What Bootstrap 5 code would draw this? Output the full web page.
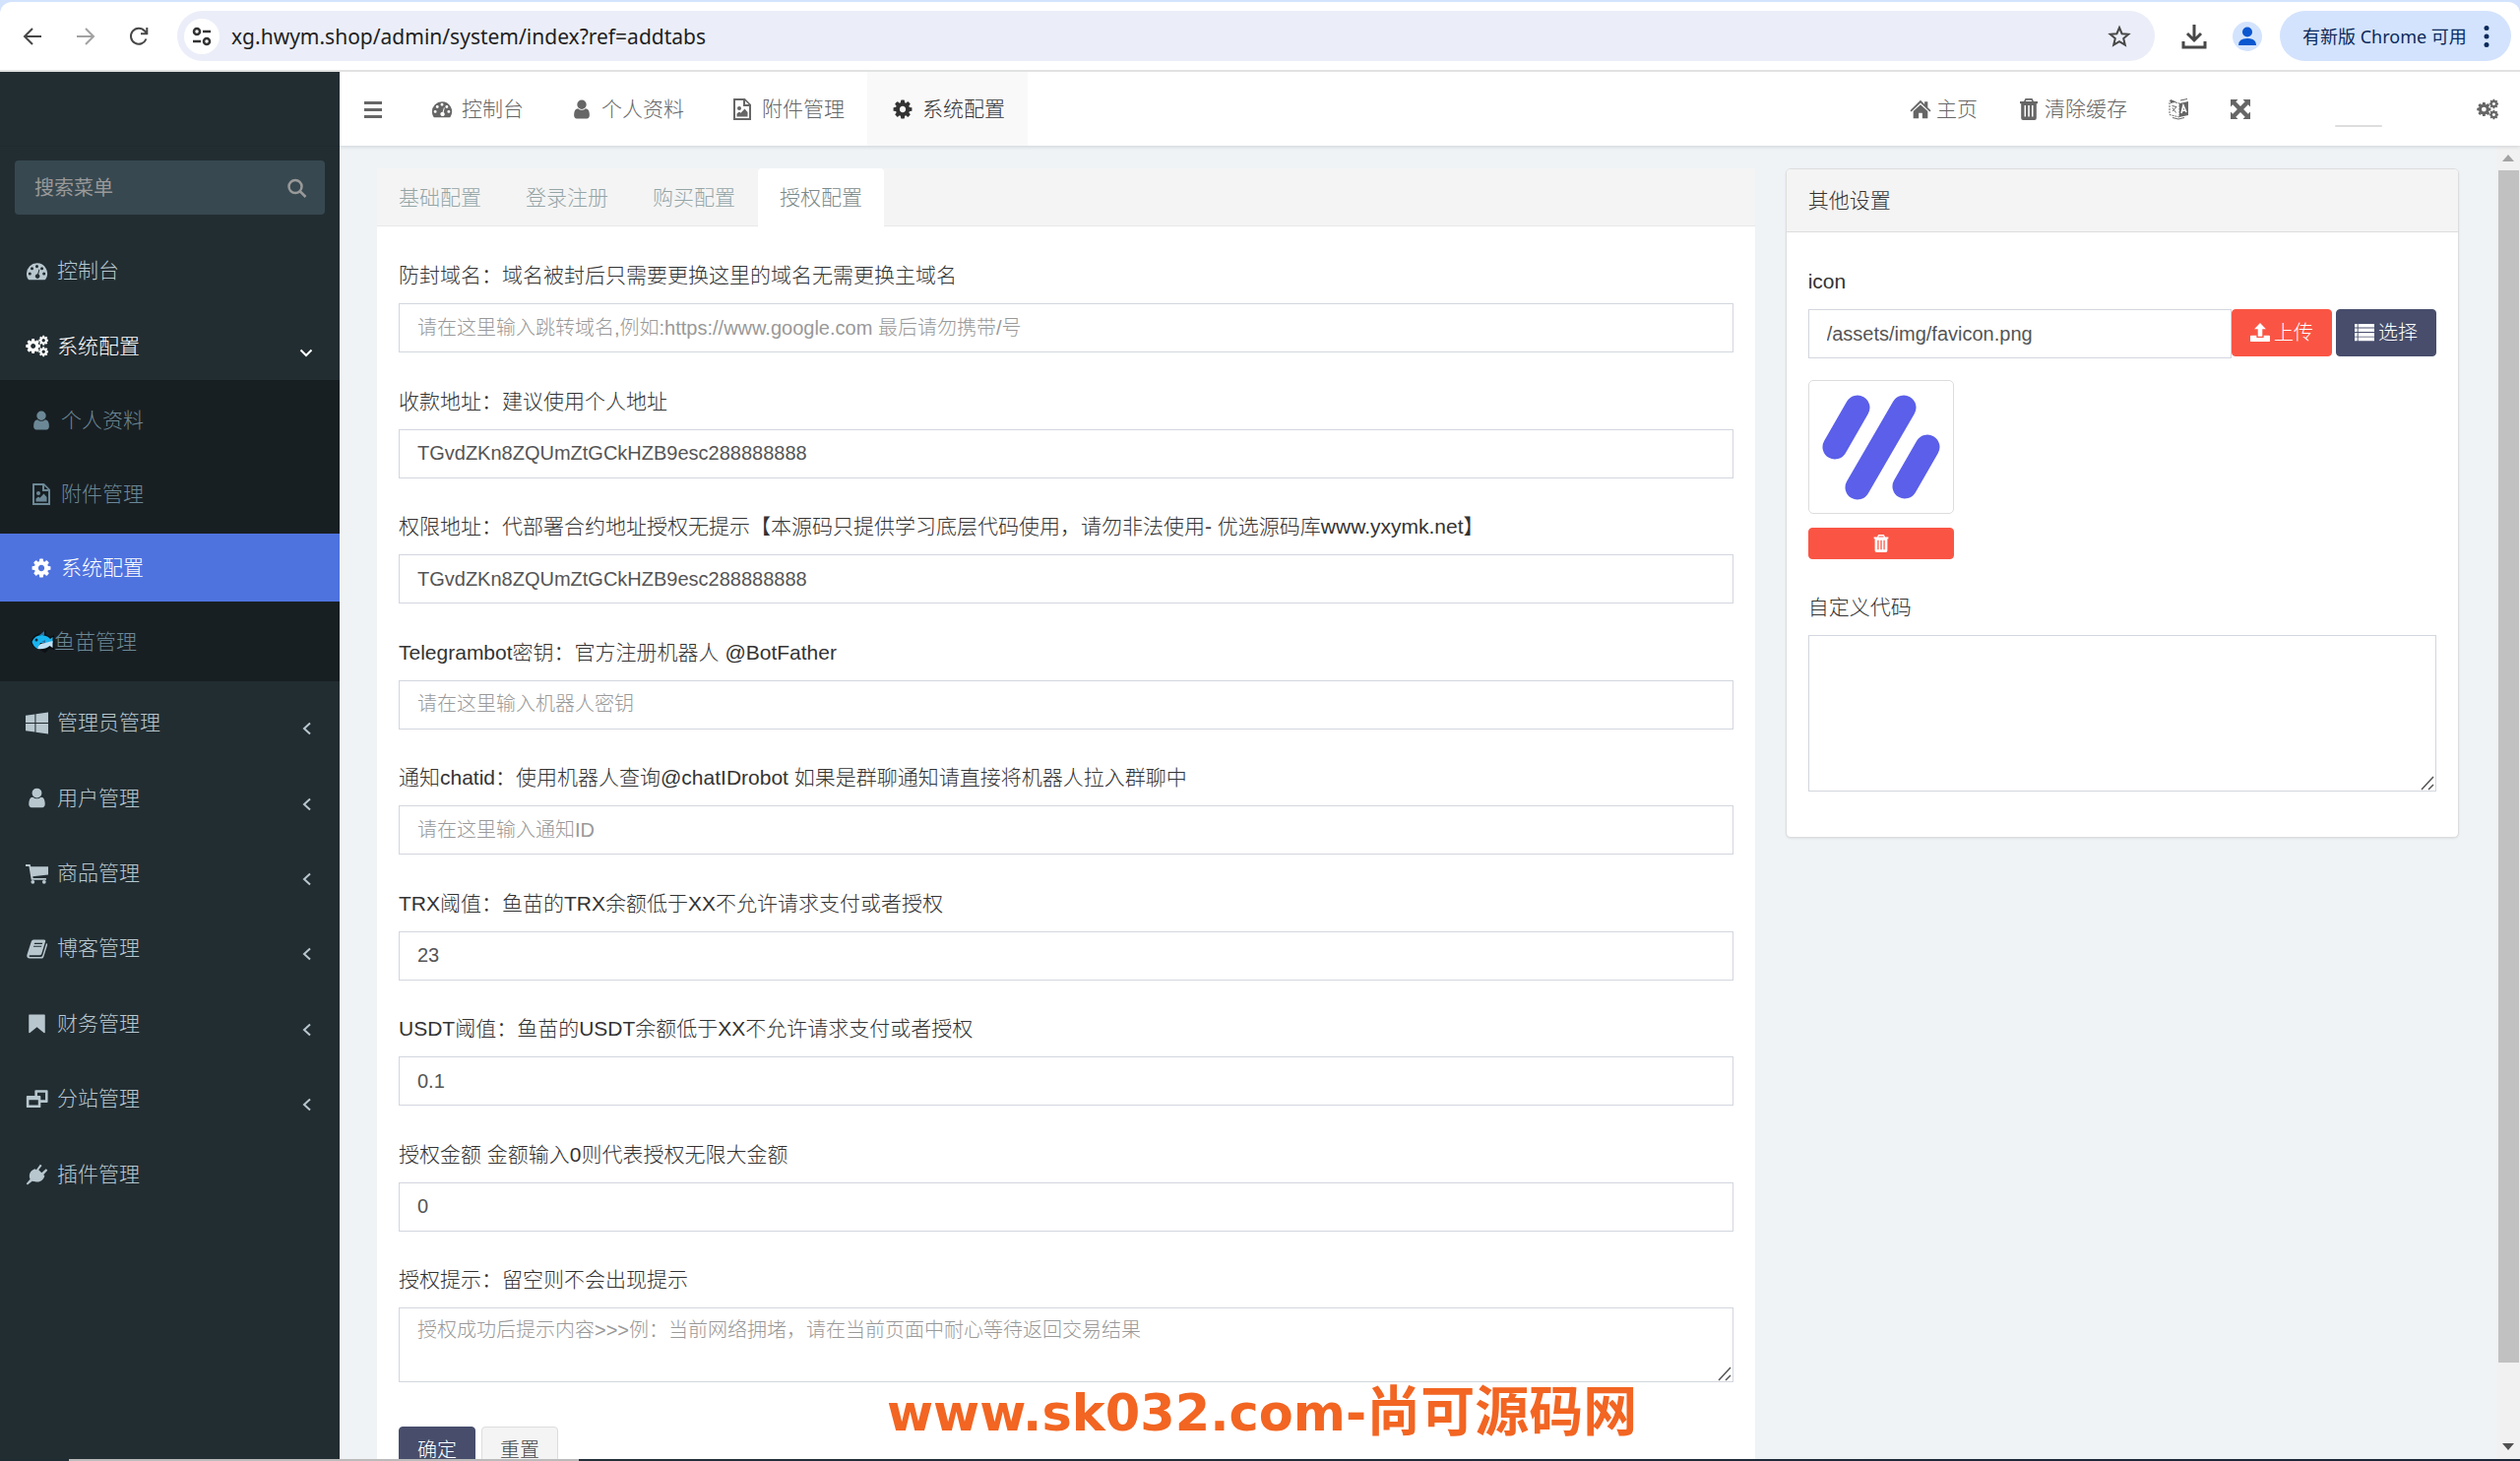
<!DOCTYPE html>
<html lang="zh-CN">
<head>
<meta charset="utf-8">
<meta name="viewport" content="width=device-width, initial-scale=1">
<title>系统配置</title>
<link href="https://cdn.jsdelivr.net/npm/bootstrap@5.3.0/dist/css/bootstrap.min.css" rel="stylesheet">
<style>
body{font-family:"Liberation Sans","Noto Sans CJK SC",sans-serif;font-size:21px;font-weight:300;line-height:30px;color:#333;height:100vh;overflow:hidden;background:#eff3f6}
a{color:inherit;text-decoration:none}
svg{display:block;flex:none}
.ic{width:22px;height:22px;fill:currentColor}
/* browser bar */
.chrome{background:#d3e3fd;padding-top:2px;flex:none}
.chrome-in{background:#fff;border-radius:12px 12px 0 0;height:71px;border-bottom:2px solid #e0e2e1;padding:0 9px 0 22px;font-family:"Noto Sans","Noto Sans CJK SC",sans-serif;font-weight:400}
.chrome button{border:0;background:none;padding:0;color:#474747}
.nav-ic{width:22px;height:22px;fill:none;stroke:currentColor;stroke-width:2}
.omni{background:#ebeef8;border-radius:26px;height:51px;padding:0 24px 0 7px;margin:0 26px 0 28px}
.site{width:36px;height:36px;border-radius:50%;background:#fff}
.omni input{border:0;background:none;outline:0;font-size:21px;color:#1f1f1f;padding:0}
.chrome .avatar{width:30px;height:30px;border-radius:50%;background:#d3e3fd;overflow:hidden;margin:0 18px 0 25px}
.chrome .update{background:#d3e3fd;border-radius:26px;height:51px;width:235px;padding:0 18px 0 23px;font-size:18px;color:#0b2a5b}
/* sidebar */
.side{width:345px;background:#222d32;color:#b8c7ce;flex:none}
.brand{height:76px;border-bottom:1px solid #1f292e}
.find{margin:14px 15px 15px;height:55px;background:#374850;border-radius:4px;padding:0 17px 0 20px;color:#999}
.find input{border:0;background:none;outline:0;color:#999;font-size:20px;padding:0;min-width:0}
.find input::placeholder{color:#999}
.menu{display:grid;grid-auto-rows:1fr}
.menu-top{height:153px}
.menu-rest{height:535px}
.menu a{display:flex;align-items:center;padding:8px 27px 0 26px}
.menu a .ic{width:23px;height:23px;margin-right:9px}
.menu a .chev{width:12px;height:14px;margin:12px 0 0 auto;fill:none;stroke:currentColor;stroke-width:2}
.menu a .chev-open{width:14px}
.sub{background:#181f23;padding:6px 0;display:grid;gap:6px;color:#6c8896}
.sub a{display:flex;align-items:center;height:69px;padding-left:31px}
.sub a .ic{margin-right:9px}
.sub a .fish{width:24px;height:24px}
.sub a.on{background:#4e73df;color:#fff}
/* top bar */
.top{height:75px;background:#fff;color:#666;box-shadow:0 1px 4px rgba(0,21,41,.15);flex:none;z-index:2}
.top a{display:flex;align-items:center;height:75px}
.tabs-main a{padding:0 23px}
.tabs-main .ic{margin:0 9px 0 2px}
.tabs-main a.on{background:#f9f9f9;color:#333}
.tools{padding-right:22px;gap:41px}
.tools a{gap:5px}
.userline{width:48px;height:2px;background:#ddd;border-radius:2px;margin:34px 55px 0 44px}
/* content */
.pane{padding:23px 0 0 38px}
.main-col{flex:1401;min-width:0}
.side-col{flex:683;min-width:0;margin:0 38px 0 31px}
.cfg-tabs{background:#f4f4f4;height:59px;border-bottom:1px solid #e8e8e8;gap:1px;color:#95a5a6}
.cfg-tabs a{padding:0 22px;height:59px;line-height:60px}
.cfg-tabs a.on{background:#fff;color:#7b8a8b;border-radius:4px 4px 0 0}
.cfg-body{background:#fff;padding:35px 22px 0;height:1300px}
.rows{display:grid;grid-template-rows:repeat(8,1fr);height:1020px}
.lab{display:block;margin-bottom:13px;line-height:30px}
.form-control,.form-control:focus{font-size:20px;font-weight:300;line-height:28px;color:#555;border:1px solid #d2d6de;border-radius:0;padding:10px 18px;box-shadow:none;background:#fff}
input.form-control{height:50px}
.form-control::placeholder{color:#999;opacity:1}
textarea.form-control{resize:vertical}
textarea.form-control::-webkit-resizer{background:url("data:image/svg+xml,%3Csvg xmlns='http://www.w3.org/2000/svg' viewBox='0 0 15 15'%3E%3Cpath d='M1 14L13 1M8 14l5-5' stroke='%23555' stroke-width='1.500' fill='none'/%3E%3C/svg%3E") center/contain no-repeat}
.tip{height:76px}
.tip.form-control{padding-top:8px;min-height:76px}
.code.form-control{height:159px}
.acts{margin-top:45px;gap:6px}
.btn{font-size:20px;font-weight:300;line-height:28px;border-radius:4px;padding:9px 18px;height:48px}
.btn-ok,.btn-ok:hover{background:#474d6b;color:#fff;border-color:#474d6b}
.btn-reset{background:#f4f4f4;color:#444;border-color:#ddd}
.btn-red,.btn-red:hover{background:#fa5544;color:#fff;border-color:#fa5544}
.pick .btn{display:flex;align-items:center;gap:4px;padding:0 18px}
.pick .ic{width:20px;height:20px}
.panel{background:#fff;border:1px solid #ddd;border-radius:5px;box-shadow:0 1px 2px rgba(0,0,0,.08);height:680px}
.panel-head{background:#f4f4f4;border-bottom:1px solid #ddd;height:64px;padding:0 22px;border-radius:4px 4px 0 0}
.panel-in{padding:35px 22px 0}
.thumb{width:148px;margin:22px 0 34px}
.thumb-box{border:1px solid #ddd;border-radius:5px;height:136px}
.thumb .btn{width:148px;height:32px;margin-top:14px;padding:0}
.thumb .ic{width:18px;height:18px}
.bar{width:24px;background:#f1f1f1;flex:none;padding:8px 1px 8px 2px}
.bar i{display:block;background:#c1c1c1;height:1211px;margin:7px 0 81px}
.bar svg{margin-left:4px}
.stamp{position:absolute;left:901px;top:1391px;color:#f26522;font:bold 51px/76px "DejaVu Sans",sans-serif;white-space:nowrap;z-index:3}
.stamp span{font:bold 55px/76px "Noto Sans CJK SC",sans-serif}
.strip{height:2px;background:linear-gradient(90deg,#1f2d33 70px,#bbb 70px,#bbb 588px,#22303a 588px,#1b2738 100%);flex:none;z-index:4}
</style>
</head>
<body class="d-flex flex-column">
<svg width="0" height="0" class="position-absolute" aria-hidden="true">
<symbol id="cog" viewBox="0 0 1792 1792"><path d="M1152 896q0-106-75-181t-181-75-181 75-75 181 75 181 181 75 181-75 75-181zm512-109v222q0 12-8 23t-20 13l-185 28q-19 54-39 91 35 50 107 138 10 12 10 25t-9 23q-27 37-99 108t-94 71q-12 0-26-9l-138-108q-44 23-91 38-16 136-29 186-7 28-36 28h-222q-14 0-24.500-8.500t-11.500-21.500l-28-184q-49-16-90-37l-141 107q-10 9-25 9-14 0-25-11-126-114-165-168-7-10-7-23 0-12 8-23 15-21 51-66.500t54-70.500q-27-50-41-99l-183-27q-13-2-21-12.500t-8-23.500v-222q0-12 8-23t19-13l186-28q14-46 39-92-40-57-107-138-10-12-10-24 0-10 9-23 26-36 98.500-107.500t94.500-71.500q13 0 26 10l138 107q44-23 91-38 16-136 29-186 7-28 36-28h222q14 0 24.500 8.500t11.500 21.500l28 184q49 16 90 37l142-107q9-9 24-9 13 0 25 10 129 119 165 170 7 8 7 22 0 12-8 23-15 21-51 66.500t-54 70.500q26 50 41 98l183 28q13 2 21 12.500t8 23.500z"/></symbol>
<symbol id="cogs" viewBox="0 0 24 24"><use href="#cog" x="-1" y="3" width="18" height="18"/><use href="#cog" x="13" y="0" width="12" height="12"/><use href="#cog" x="13" y="12" width="12" height="12"/></symbol>
<symbol id="user" viewBox="0 0 1792 1792"><path d="M1536 1399q0 109-62.500 187t-150.500 78h-854q-88 0-150.500-78t-62.500-187q0-85 8.500-160.500t31.500-152 58.500-131 94-89 134.500-34.500q131 128 313 128t313-128q76 0 134.500 34.500t94 89 58.500 131 31.500 152 8.500 160.500zm-256-887q0 159-112.500 271.500t-271.500 112.500-271.500-112.500-112.500-271.500 112.500-271.500 271.500-112.500 271.500 112.500 112.500 271.500z"/></symbol>
<symbol id="dash" viewBox="0 0 24 24"><path fill-rule="evenodd" d="M12 3.500A11 11 0 0 0 1 14.500c0 2.200.6 4.200 1.700 5.900.2.400.6.600 1 .6h16.600c.4 0 .8-.2 1-.6A11 11 0 0 0 12 3.500zM4.500 13a1.600 1.600 0 1 1 0 3.200 1.600 1.600 0 0 1 0-3.200zm2.300-5.400a1.600 1.600 0 1 1 0 3.200 1.600 1.600 0 0 1 0-3.200zM12 5.300a1.600 1.600 0 1 1 0 3.200 1.600 1.600 0 0 1 0-3.200zm5.300 2.300a1.600 1.600 0 1 1 0 3.200 1.600 1.600 0 0 1 0-3.200zm2.200 5.400a1.600 1.600 0 1 1 0 3.200 1.600 1.600 0 0 1 0-3.200zm-5.400-3 .9.300-1.200 4.900a2.400 2.400 0 1 1-1.100-.3z"/></symbol>
<symbol id="img" viewBox="0 0 22 22"><path fill-rule="evenodd" d="M2.500 0h11.300L20 6.200V22h-18V.500zM4 2v18h14V8h-6V2zm10 .5V6h3.600z"/><path d="M5.500 18.500v-3l2.500-2 1.500 1.300 4-4.300 3 3.500v4.500z"/><circle cx="8" cy="10" r="2"/></symbol>
<symbol id="win" viewBox="0 0 22 22"><path d="M0 3.700l9-1.300v8.100H0zM10 2.200 22 .5v10H10zM0 11.500h9v8.100l-9-1.300zM10 11.500h12v10l-12-1.700z"/></symbol>
<symbol id="cart" viewBox="0 0 22 22"><path d="M0 2h4.500l.6 2H22v8L7 13.700l.3 1.500H20v1.800H5.500L3.300 3.800H0z"/><circle cx="7" cy="19" r="1.800"/><circle cx="18" cy="19" r="1.800"/></symbol>
<symbol id="book" viewBox="0 0 24 24"><path fill-rule="evenodd" d="M8.500 2.500h11c1.300 0 1.900.8 1.500 2l-4 13c-.3 1-1 1.500-2 1.500H4.500c-1.200 0-1 1.800.2 1.800h11.500c.9 0 1.400-.4 1.700-1.200L22 6.200c1 .5 1.200 1.300.9 2.300l-3.700 12c-.4 1.200-1.300 2-2.500 2H4.500c-2.300 0-3.700-2-3-4l4.600-14c.4-1.200 1.300-2 2.400-2zM9.500 6l-.4 1.300h8.500L18 6zM8.600 9l-.4 1.300h8.500l.4-1.300z"/></symbol>
<symbol id="mark" viewBox="0 0 24 24"><path d="M4 2.500h16q.6 0 .6.8v18.500l-1 .4L12 16l-7.600 6.200-1-.4V3.300q0-.8.600-.8z"/></symbol>
<symbol id="clone" viewBox="0 0 27 24"><path fill-rule="evenodd" d="M12 1h13.500q1 0 1 1v13q0 1-1 1H18v5q0 1-1 1H2q-1 0-1-1V9q0-1 1-1h9V2q0-1 1-1zm2 3v4h3q1 0 1 1v4h5.500V4zM4 13v6h11v-6z"/></symbol>
<symbol id="plug" viewBox="0 0 24 24"><path d="m15.500 1.800 1.800 1.200-3.500 4.500 3.200 3.200 4.700-4.200 1.500 1.500-4.200 4.700 1.200 1.200c-1 4.500-5 7.500-9.800 6.300L7 19.500l-5 4-1.200-1.200 4-4.700c-2-4.600 0-9.500 5.200-11l1.300 1z"/></symbol>
<symbol id="home" viewBox="0 0 24 24"><path d="m12 2 4.500 4.500V3.500H20V10l3.500 3.300-1.300 1.300L12 5 1.800 14.600.5 13.300zM12 6.800l8 7.500V22h-6v-6h-4v6H4v-7.700z"/></symbol>
<symbol id="trash" viewBox="0 0 22 22"><path fill-rule="evenodd" d="M7.500 0h7l1.500 3h4v2.200h-1.200V20q0 2-2 2H5.200q-2 0-2-2V5.200H2V3h4zm.9 1.700L7.700 3h6.600l-.7-1.300zM6.500 7v11.500H8V7zm3.700 0v11.500h1.600V7zM14 7v11.500h1.500V7z"/></symbol>
<symbol id="lang" viewBox="0 0 22 22"><path d="M2 2.500 12 5v14L2 16.500z" fill="none" stroke="currentColor" stroke-dasharray="2 1"/><path d="M3 1l6 2.500L3 5zM12 5l9-2v14l-9 2z"/><path d="M4.500 7.500l4.500 1M5 13l4-4.500M5 9.500l3.500 5M13 2l7-1.500M5 19.500q6 3 12 0" fill="none" stroke="currentColor"/><path d="m14 15 2-8 3 7M15 12.500l3-.5" fill="none" stroke="#fff" stroke-width="1.500"/></symbol>
<symbol id="full" viewBox="0 0 22 22"><path d="M1 1h7.500L6.300 3.200 11 7.900l4.700-4.700L13.500 1H21v7.500l-2.200-2.200-4.700 4.700 4.700 4.700 2.200-2.200V21h-7.500l2.200-2.200-4.700-4.700-4.700 4.700L8.500 21H1v-7.500l2.200 2.200L7.900 11 3.200 6.300 1 8.500z"/></symbol>
<symbol id="up" viewBox="0 0 22 22"><path d="m11 0 6.500 7H13.500v8h-5V7H4.500zM1 14h6v2.500h8V14h6q1 0 1 1v5q0 1-1 1H1q-1 0-1-1v-5q0-1 1-1z"/></symbol>
<symbol id="list" viewBox="0 0 22 22"><path d="M0 1h3v4H0zm4 0h18v4H4zM0 6h3v4H0zm4 0h18v4H4zM0 11h3v4H0zm4 0h18v4H4zM0 16h3v4H0zm4 0h18v4H4z"/></symbol>
<symbol id="lens" viewBox="0 0 22 22"><path fill="none" stroke="currentColor" stroke-width="2.500" d="M15.500 9.500a6.500 6.500 0 1 1-13 0 6.500 6.500 0 0 1 13 0zM14 14.500l5.500 5.500"/></symbol>
<symbol id="left" viewBox="0 0 12 14"><path d="M9 1.500 3 7l6 5.500"/></symbol>
</svg>

<header class="chrome"><div class="chrome-in d-flex align-items-center">
<button aria-label="后退"><svg class="nav-ic" viewBox="0 0 22 22"><path d="M20 11H3M11 3l-8 8 8 8"/></svg></button>
<button aria-label="前进" class="ms-4 ps-2"><svg class="nav-ic" viewBox="0 0 22 22" opacity=".5"><path d="M2 11h17M11 3l8 8-8 8"/></svg></button>
<button aria-label="刷新" class="ms-4 ps-2"><svg class="nav-ic" viewBox="0 0 22 22"><path d="M18.500 13.500a8 8 0 1 1-1.500-8L19 8M19.300 2v6.300H13"/></svg></button>
<div class="omni d-flex align-items-center flex-grow-1">
<span class="site d-flex align-items-center justify-content-center"><svg width="20" height="20" viewBox="0 0 20 20" fill="none" stroke="#333" stroke-width="2.500"><circle cx="5" cy="5" r="3"/><path d="M11 5h8M1 15h8"/><circle cx="15" cy="15" r="3"/></svg></span>
<input class="flex-grow-1 ms-2 ps-1" aria-label="地址" value="xg.hwym.shop/admin/system/index?ref=addtabs">
<button aria-label="收藏"><svg width="24" height="24" viewBox="0 0 24 24" fill="none" stroke="currentColor" stroke-width="2"><path d="m12 3 2.600 6.200 6.700.5-5.100 4.400 1.600 6.500L12 17.100l-5.800 3.500 1.600-6.500-5.100-4.400 6.700-.5z"/></svg></button>
</div>
<button aria-label="下载"><svg width="28" height="28" viewBox="0 0 28 28" fill="none" stroke="currentColor" stroke-width="3"><path d="M14 2v15M7 11l7 7 7-7M3 19v6h22v-6"/></svg></button>
<button class="avatar" aria-label="用户"><svg width="30" height="30" viewBox="0 0 30 30" fill="#0b57d0"><circle cx="15" cy="10.500" r="5"/><path d="M6 24q0-7 9-7t9 7z"/></svg></button>
<button class="update d-flex align-items-center justify-content-between text-nowrap">有新版 Chrome 可用<svg width="14" height="24" viewBox="0 0 14 24" fill="#0b2a5b"><circle cx="7" cy="3.500" r="2.500"/><circle cx="7" cy="12" r="2.500"/><circle cx="7" cy="20.500" r="2.500"/></svg></button>
</div></header>

<div class="d-flex flex-grow-1 overflow-hidden">
<aside class="side">
<div class="brand"></div>
<div class="find d-flex align-items-center"><input type="search" class="flex-grow-1" placeholder="搜索菜单" aria-label="搜索菜单"><svg class="ic"><use href="#lens"/></svg></div>
<nav>
<div class="menu menu-top">
<a href="#"><svg class="ic"><use href="#dash"/></svg>控制台</a>
<a href="#" class="text-white"><svg class="ic"><use href="#cogs"/></svg>系统配置<svg class="chev chev-open" viewBox="0 0 14 14"><path d="M1.500 4.500 7 10l5.500-5.500"/></svg></a>
</div>
<div class="sub">
<a href="#"><svg class="ic"><use href="#user"/></svg>个人资料</a>
<a href="#"><svg class="ic"><use href="#img"/></svg>附件管理</a>
<a href="#" class="on"><svg class="ic"><use href="#cog"/></svg>系统配置</a>
<a href="#"><svg class="fish" viewBox="0 0 24 24"><path fill="#0b0f12" d="M0 12Q3 4 11 3l5-3-1 4 5 3 4-2v15l-5-1-4 4-6-3Q2 18 0 12z"/><path fill="#18b4f0" d="M1.500 12Q4 5 12 5q6 1 8 4l2.500-2v6L10 13l-3 6Q3 17 1.500 12z"/><path fill="#bfe0f5" d="M7 19q1-6 8-6l7.500-2v7l-3-2q-5 4-12.500 3z"/><path fill="#2b6fa3" d="m9 5 5-4v4zM11 12l4-2v3z"/><circle cx="6" cy="10" r="1.500" fill="#0b2a3b"/></svg>鱼苗管理</a>
</div>
<div class="menu menu-rest">
<a href="#"><svg class="ic"><use href="#win"/></svg>管理员管理<svg class="chev"><use href="#left"/></svg></a>
<a href="#"><svg class="ic"><use href="#user"/></svg>用户管理<svg class="chev"><use href="#left"/></svg></a>
<a href="#"><svg class="ic"><use href="#cart"/></svg>商品管理<svg class="chev"><use href="#left"/></svg></a>
<a href="#"><svg class="ic"><use href="#book"/></svg>博客管理<svg class="chev"><use href="#left"/></svg></a>
<a href="#"><svg class="ic"><use href="#mark"/></svg>财务管理<svg class="chev"><use href="#left"/></svg></a>
<a href="#"><svg class="ic"><use href="#clone"/></svg>分站管理<svg class="chev"><use href="#left"/></svg></a>
<a href="#"><svg class="ic"><use href="#plug"/></svg>插件管理</a>
</div>
</nav>
</aside>

<div class="d-flex flex-column flex-grow-1 overflow-hidden">
<div class="top d-flex justify-content-between">
<div class="d-flex tabs-main">
<a href="#" aria-label="菜单"><svg width="22" height="20" viewBox="0 0 22 20" fill="#666"><path d="M2 2h18v3H2zm0 7h18v3H2zm0 7h18v3H2z"/></svg></a>
<a href="#"><svg class="ic"><use href="#dash"/></svg>控制台</a>
<a href="#"><svg class="ic"><use href="#user"/></svg>个人资料</a>
<a href="#"><svg class="ic"><use href="#img"/></svg>附件管理</a>
<a href="#" class="on"><svg class="ic"><use href="#cog"/></svg>系统配置</a>
</div>
<div class="d-flex align-items-center tools">
<a href="#"><svg class="ic"><use href="#home"/></svg>主页</a>
<a href="#"><svg class="ic"><use href="#trash"/></svg>清除缓存</a>
<a href="#" aria-label="语言"><svg class="ic"><use href="#lang"/></svg></a>
<a href="#" aria-label="全屏"><svg class="ic"><use href="#full"/></svg></a>
<span class="userline"></span>
<a href="#" aria-label="设置"><svg class="ic"><use href="#cogs"/></svg></a>
</div>
</div>

<div class="d-flex flex-grow-1 overflow-hidden">
<main class="pane d-flex flex-grow-1 align-items-start">
<section class="main-col">
<nav class="cfg-tabs d-flex"><a href="#">基础配置</a><a href="#">登录注册</a><a href="#">购买配置</a><a href="#" class="on">授权配置</a></nav>
<form class="cfg-body">
<div class="rows">
<div><label class="lab" for="f1">防封域名：域名被封后只需要更换这里的域名无需更换主域名</label><input id="f1" class="form-control" placeholder="请在这里输入跳转域名,例如:https://www.google.com 最后请勿携带/号"></div>
<div><label class="lab" for="f2">收款地址：建议使用个人地址</label><input id="f2" class="form-control" value="TGvdZKn8ZQUmZtGCkHZB9esc288888888"></div>
<div><label class="lab" for="f3">权限地址：代部署合约地址授权无提示【本源码只提供学习底层代码使用，请勿非法使用- 优选源码库www.yxymk.net】</label><input id="f3" class="form-control" value="TGvdZKn8ZQUmZtGCkHZB9esc288888888"></div>
<div><label class="lab" for="f4">Telegrambot密钥：官方注册机器人 @BotFather</label><input id="f4" class="form-control" placeholder="请在这里输入机器人密钥"></div>
<div><label class="lab" for="f5">通知chatid：使用机器人查询@chatIDrobot 如果是群聊通知请直接将机器人拉入群聊中</label><input id="f5" class="form-control" placeholder="请在这里输入通知ID"></div>
<div><label class="lab" for="f6">TRX阈值：鱼苗的TRX余额低于XX不允许请求支付或者授权</label><input id="f6" class="form-control" value="23"></div>
<div><label class="lab" for="f7">USDT阈值：鱼苗的USDT余额低于XX不允许请求支付或者授权</label><input id="f7" class="form-control" value="0.1"></div>
<div><label class="lab" for="f8">授权金额 金额输入0则代表授权无限大金额</label><input id="f8" class="form-control" value="0"></div>
</div>
<label class="lab" for="f9">授权提示：留空则不会出现提示</label><textarea id="f9" class="form-control tip" placeholder="授权成功后提示内容&gt;&gt;&gt;例：当前网络拥堵，请在当前页面中耐心等待返回交易结果"></textarea>
<div class="d-flex acts"><button type="button" class="btn btn-ok">确定</button><button type="reset" class="btn btn-reset">重置</button></div>
</form>
</section>
<section class="side-col panel">
<div class="panel-head d-flex align-items-center">其他设置</div>
<div class="panel-in">
<label class="lab" for="g1">icon</label>
<div class="d-flex pick"><input id="g1" class="form-control flex-grow-1" value="/assets/img/favicon.png"><button type="button" class="btn btn-red text-nowrap me-1"><svg class="ic"><use href="#up"/></svg>上传</button><button type="button" class="btn btn-ok text-nowrap"><svg class="ic"><use href="#list"/></svg>选择</button></div>
<div class="thumb"><div class="thumb-box"><svg width="146" height="134" viewBox="1 1 146 134" stroke="#5b5fe9" stroke-width="25" stroke-linecap="round"><path d="M50 28 27 68M97 28 50 109M121 68 98 108"/></svg></div>
<button type="button" class="btn btn-red d-flex align-items-center justify-content-center" aria-label="删除"><svg class="ic"><use href="#trash"/></svg></button></div>
<label class="lab" for="g2">自定义代码</label>
<textarea id="g2" class="form-control code"></textarea>
</div>
</section>
</main>
<div class="bar"><svg width="12" height="10" viewBox="0 0 12 10" fill="#a3a3a3"><path d="M6 1l6 7H0z"/></svg><i></i><svg width="12" height="10" viewBox="0 0 12 10" fill="#505050"><path d="M6 8L0 1h12z"/></svg></div>
</div>
</div>
</div>
<div class="strip"></div>
<div class="stamp">www.sk032.com-<span>尚可源码网</span></div>
<script src="https://cdn.jsdelivr.net/npm/bootstrap@5.3.0/dist/js/bootstrap.bundle.min.js"></script>
</body>
</html>
